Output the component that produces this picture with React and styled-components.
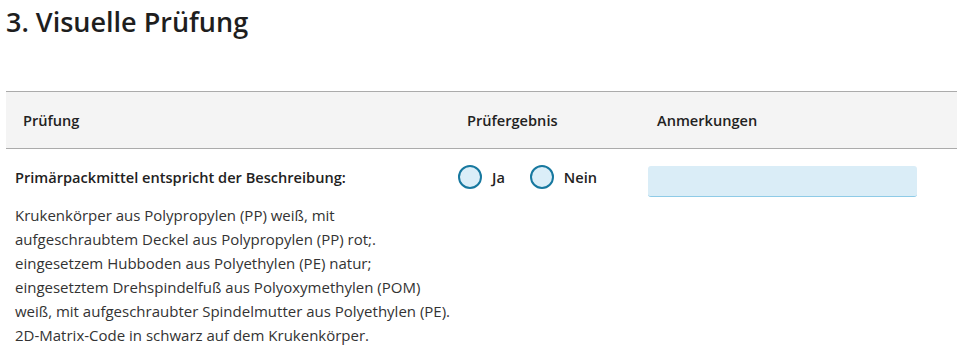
import React, { useState } from "react";
import styled, { createGlobalStyle } from "styled-components";

const GlobalStyle = createGlobalStyle`
  body {
    margin: 0;
    padding: 0 6px;
    font-family: "Open Sans", "Liberation Sans", sans-serif;
    color: #222;
    background: #fff;
  }
`;

const Heading = styled.h2`
  margin: 0;
  padding-top: 2px;
  font-size: 27px;
  line-height: 40px;
  font-weight: 600;
  color: #1e1e1e;
`;

const Table = styled.div`
  margin-top: 49px;
  display: grid;
  grid-template-columns: 444px 190px 1fr;
  width: 951px;
`;

const HeadCell = styled.div`
  background: #f4f4f4;
  border-top: 1px solid #ababab;
  border-bottom: 1px solid #ababab;
  height: 56px;
  padding-left: 17px;
  display: flex;
  align-items: center;
  font-size: 14.6px;
  font-weight: 600;
  color: #222;
`;

const Cell = styled.div`
  padding: 16px 8px 0 ${props => props.$pl || 8}px;
  font-size: 15px;
  line-height: 24px;
  color: #333;
`;

const Label = styled.div`
  font-size: 14.6px;
  font-weight: 600;
  color: #222;
`;

const Description = styled.p`
  margin: 14px 0 0;
  white-space: nowrap;
`;

const RadioGroup = styled.div`
  display: flex;
  align-items: center;
  gap: 25px;
  height: 24px;
`;

const RadioLabel = styled.label`
  display: flex;
  align-items: center;
  gap: 10px;
  font-size: 14.6px;
  font-weight: 600;
  color: #222;
  cursor: pointer;
`;

const RadioCircle = styled.span`
  box-sizing: border-box;
  width: 24px;
  height: 24px;
  border-radius: 50%;
  border: 2px solid #17789f;
  background: ${props => (props.$checked ? "#17789f" : "#dbeef8")};
  box-shadow: ${props => (props.$checked ? "inset 0 0 0 4px #dbeef8" : "none")};
`;

const NoteInput = styled.input`
  box-sizing: border-box;
  display: block;
  margin-top: 1px;
  width: 269px;
  height: 31px;
  border: none;
  border-bottom: 1px solid #8ecbe7;
  border-radius: 3px;
  background: #daedf7;
  font-family: inherit;
  font-size: 15px;
  padding: 0 8px;
  outline: none;
`;

const App = () => {
  const [result, setResult] = useState(null);

  return (
    <>
      <GlobalStyle />
      <Heading>3. Visuelle Prüfung</Heading>
      <Table>
        <HeadCell>Prüfung</HeadCell>
        <HeadCell>Prüfergebnis</HeadCell>
        <HeadCell>Anmerkungen</HeadCell>

        <Cell $pl={9}>
          <Label>Primärpackmittel entspricht der Beschreibung:</Label>
          <Description>
            Krukenkörper aus Polypropylen (PP) weiß, mit<br />
            aufgeschraubtem Deckel aus Polypropylen (PP) rot;.<br />
            eingesetzem Hubboden aus Polyethylen (PE) natur;<br />
            eingesetztem Drehspindelfuß aus Polyoxymethylen (POM)<br />
            weiß, mit aufgeschraubter Spindelmutter aus Polyethylen (PE).<br />
            2D-Matrix-Code in schwarz auf dem Krukenkörper.
          </Description>
        </Cell>
        <Cell>
          <RadioGroup>
            {["Ja", "Nein"].map(option => (
              <RadioLabel key={option} onClick={() => setResult(option)}>
                <RadioCircle $checked={result === option} />
                {option}
              </RadioLabel>
            ))}
          </RadioGroup>
        </Cell>
        <Cell>
          <NoteInput type="text" />
        </Cell>
      </Table>
    </>
  );
};

export default App;
